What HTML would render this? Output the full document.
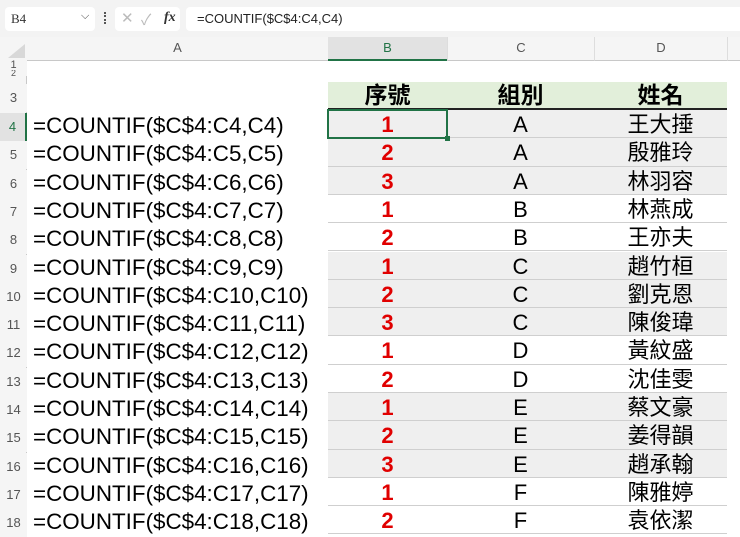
<!DOCTYPE html>
<html><head><meta charset="utf-8"><style>
*{margin:0;padding:0;box-sizing:border-box}
body{width:740px;height:526px;overflow:hidden;background:#fff;position:relative;font-family:"Liberation Sans","Noto Sans CJK TC",sans-serif}
.a{position:absolute}
.fx{left:0;top:0;width:740px;height:37px;background:#f3f3f3}
.box{background:#fff;border-radius:4px;height:24px;top:7px}
.ch{top:37px;height:24px;background:#f5f5f5;border-bottom:1px solid #c8c8c8;color:#555;font-size:13px;text-align:center;line-height:22px}
.rh{left:0;width:27px;background:#f5f5f5;color:#555;font-size:13px;text-align:center}
.f{left:33px;font-size:22.4px;color:#000;white-space:nowrap}
.row{left:328px;width:399px;height:28.3px;border-bottom:1px solid #cfcfcf}
.c{position:absolute;top:1px;height:28px;line-height:28px;text-align:center;font-size:22px}
</style></head><body>
<div class="a fx"></div>
<div class="a box" style="left:5px;width:90px"><span class="a" style="left:6px;top:4px;font-size:13px;font-family:'Liberation Serif',serif;color:#333">B4</span><span class="a" style="left:76px;top:3px;font-size:11px;color:#444">⌵</span></div>
<div class="a" style="left:104px;top:12px;width:3px;height:12px;border-left:2px dotted #555"></div>
<div class="a box" style="left:115px;width:65px"><span class="a" style="left:6px;top:2px;font-size:15px;color:#bbb">✕</span><span class="a" style="left:26px;top:2px;font-size:15px;color:#bbb">✓</span><span class="a" style="left:49px;top:3px;font-size:14px;font-style:italic;font-family:'Liberation Serif',serif;color:#333"><b>fx</b></span></div>
<div class="a box" style="left:186px;width:560px"><span class="a" style="left:11px;top:4px;font-size:13px;color:#222">=COUNTIF($C$4:C4,C4)</span></div>
<div class="a ch" style="left:0;width:27px;background:#f5f5f5"></div>
<div class="a" style="left:8px;top:44px;width:0;height:0;border-left:17px solid transparent;border-bottom:14px solid #d8d8d8"></div>
<div class="a ch" style="left:27px;width:301px">A</div>
<div class="a ch" style="left:328px;width:119px;background:#e2e2e2;color:#217346;border-bottom:2px solid #217346">B</div>
<div class="a ch" style="left:447px;width:147px;border-left:1px solid #ddd">C</div>
<div class="a ch" style="left:594px;width:133px;border-left:1px solid #ddd">D</div>
<div class="a ch" style="left:727px;width:13px;border-left:1px solid #ddd"></div>
<div class="a rh" style="top:61px;height:465px;border-right:1px solid #c8c8c8"></div>
<div class="a rh" style="top:60px;height:10px;font-size:11px;line-height:10px">1</div>
<div class="a rh" style="top:70px;height:6px;font-size:9px;line-height:6px;overflow:hidden">2</div>
<div class="a rh" style="top:84px;height:28px;line-height:28px">3</div>
<div class="a" style="left:328px;top:82px;width:399px;height:28px;background:#e2efda;border-bottom:2px solid #222"></div>
<div class="a" style="left:328px;top:80px;width:119px;text-align:center;font-size:23px;font-weight:bold;line-height:30px">序號</div>
<div class="a" style="left:447px;top:80px;width:147px;text-align:center;font-size:23px;font-weight:bold;line-height:30px">組別</div>
<div class="a" style="left:594px;top:80px;width:133px;text-align:center;font-size:23px;font-weight:bold;line-height:30px">姓名</div>
<div id="rows"></div>
<script>
var d=[[1,'A','王大捶'],[2,'A','殷雅玲'],[3,'A','林羽容'],[1,'B','林燕成'],[2,'B','王亦夫'],[1,'C','趙竹桓'],[2,'C','劉克恩'],[3,'C','陳俊瑋'],[1,'D','黃紋盛'],[2,'D','沈佳雯'],[1,'E','蔡文豪'],[2,'E','姜得韻'],[3,'E','趙承翰'],[1,'F','陳雅婷'],[2,'F','袁依潔']];
var h='';
for(var i=0;i<d.length;i++){var r=i+4,t=110+i*28.3;var g='ACE'.indexOf(d[i][1])>=0;
h+='<div class="a rh" style="top:'+(t+3)+'px;height:28px;line-height:28px;'+(r==4?'background:#e2e2e2;color:#217346;border-right:2px solid #217346':'')+'">'+r+'</div>';
h+='<div class="a f" style="top:'+(t+2)+'px;line-height:28px">=COUNTIF($C$4:C'+r+',C'+r+')</div>';
h+='<div class="a row" style="top:'+t+'px;background:'+(g?'#efefef':'#fff')+'"><div class="c" style="left:0;width:119px;color:#e00000;font-weight:bold">'+d[i][0]+'</div><div class="c" style="left:119px;width:147px">'+d[i][1]+'</div><div class="c" style="left:266px;width:133px">'+d[i][2]+'</div></div>';}
h+='<div class="a" style="left:327px;top:109px;width:121px;height:30px;border:2px solid #217346"></div><div class="a" style="left:445px;top:136px;width:5px;height:5px;background:#217346"></div>';
document.getElementById('rows').innerHTML=h;
</script>
</body></html>
